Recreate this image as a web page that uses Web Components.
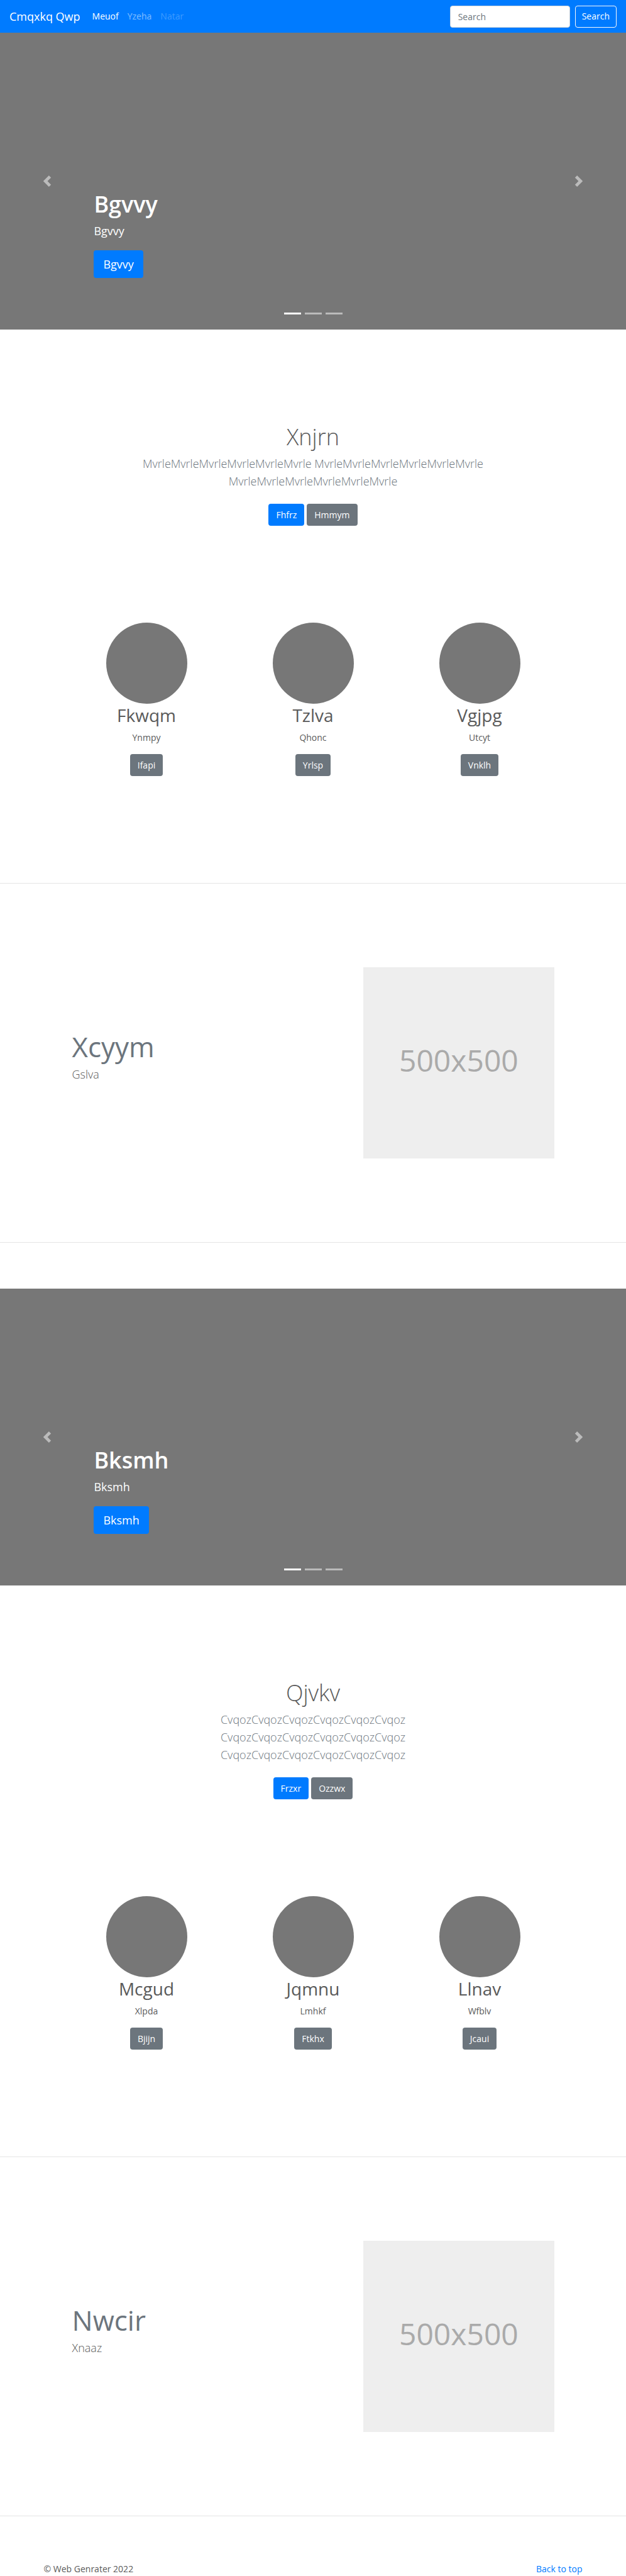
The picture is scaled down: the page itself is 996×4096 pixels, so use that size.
<!DOCTYPE html>
<html lang="en">
<head>
<meta charset="utf-8">
<meta name="viewport" content="width=device-width, initial-scale=1">
<title>Cmqxkq Qwp</title>
<style>
  html { background: #fff; }
  body {
    margin: 0;
    font-family: "Open Sans", "Noto Sans", sans-serif;
    font-size: 14px;
    line-height: 22px;
    color: #5a5a5a;
    --blue: #007bff;
    --gray: #6c757d;
    --fill: #777;
    --row: 795px;
  }
</style>
</head>
<body>
<site-nav brand="Cmqxkq Qwp">
  <nav-link state="active">Meuof</nav-link>
  <nav-link>Yzeha</nav-link>
  <nav-link state="disabled">Natar</nav-link>
</site-nav>
<main>
  <hero-carousel>
    <span slot="title">Bgvvy</span>
    <span slot="text">Bgvvy</span>
    <ui-button slot="action" size="large">Bgvvy</ui-button>
  </hero-carousel>
  <intro-block>
    <span slot="title">Xnjrn</span>
    MvrleMvrleMvrleMvrleMvrleMvrle MvrleMvrleMvrleMvrleMvrleMvrle MvrleMvrleMvrleMvrleMvrleMvrle
    <ui-button slot="actions">Fhfrz</ui-button>
    <ui-button slot="actions" variant="secondary">Hmmym</ui-button>
  </intro-block>
  <card-row>
    <profile-card name="Fkwqm" action="Ifapi">Ynmpy</profile-card>
    <profile-card name="Tzlva" action="Yrlsp">Qhonc</profile-card>
    <profile-card name="Vgjpg" action="Vnklh">Utcyt</profile-card>
  </card-row>
  <feature-row heading="Xcyym" picture="500x500">Gslva</feature-row>

  <hero-carousel>
    <span slot="title">Bksmh</span>
    <span slot="text">Bksmh</span>
    <ui-button slot="action" size="large">Bksmh</ui-button>
  </hero-carousel>
  <intro-block>
    <span slot="title">Qjvkv</span>
    CvqozCvqozCvqozCvqozCvqozCvqoz CvqozCvqozCvqozCvqozCvqozCvqoz CvqozCvqozCvqozCvqozCvqozCvqoz
    <ui-button slot="actions">Frzxr</ui-button>
    <ui-button slot="actions" variant="secondary">Ozzwx</ui-button>
  </intro-block>
  <card-row>
    <profile-card name="Mcgud" action="Bjijn">Xlpda</profile-card>
    <profile-card name="Jqmnu" action="Ftkhx">Lmhkf</profile-card>
    <profile-card name="Llnav" action="Jcaui">Wfblv</profile-card>
  </card-row>
  <feature-row heading="Nwcir" picture="500x500">Xnaaz</feature-row>
</main>
<site-footer>© Web Genrater 2022</site-footer>

<script>
  function define(name, render) {
    customElements.define(name, class extends HTMLElement {
      constructor() {
        super();
        this.attachShadow({ mode: "open" });
      }
      connectedCallback() {
        this.shadowRoot.innerHTML = render(this);
      }
    });
  }

  define("ui-button", () => `
    <style>
      :host { display: inline-block; --bg: var(--blue); }
      :host([variant="secondary"]) { --bg: var(--gray); }
      button {
        display: block; box-sizing: border-box; height: 35px; padding: 0 12px;
        font: inherit; font-size: 14px; font-weight: 400; line-height: 22px; color: #fff;
        background: var(--bg); border: 0; border-radius: 4px; cursor: pointer;
      }
      :host([size="large"]) button { height: 44px; padding: 0 15px; font-size: 18px; line-height: 28px; }
      :host([variant="outline"]) button { background: transparent; border: 1px solid #f8f9fa; padding: 0 10px; }
    </style>
    <button type="button"><slot></slot></button>`);

  define("nav-link", () => `
    <style>
      :host { display: block; }
      a { display: block; padding: 7px; color: rgba(255, 255, 255, .5); text-decoration: none; }
      :host([state="active"]) a { color: #fff; }
      :host([state="disabled"]) a { color: rgba(255, 255, 255, .25); }
    </style>
    <a href="#"><slot></slot></a>`);

  define("site-nav", el => `
    <style>
      :host { display: block; background: var(--blue); }
      nav { display: flex; align-items: center; box-sizing: border-box; min-height: 52px; padding: 0 15px; }
      .brand { margin-right: 12px; font-size: 18px; line-height: 28px; color: #fff; text-decoration: none; white-space: nowrap; }
      .links { display: flex; flex: 1; }
      form { display: flex; align-items: center; gap: 8px; }
      input {
        box-sizing: border-box; width: 191px; height: 35px; padding: 0 12px; font: inherit; color: #495057;
        background: #fff; border: 1px solid #ced4da; border-radius: 4px;
      }
      input::placeholder { color: #6c757d; opacity: 1; }
    </style>
    <nav>
      <a class="brand" href="#">${el.getAttribute("brand")}</a>
      <div class="links"><slot></slot></div>
      <form role="search">
        <input type="search" placeholder="Search" aria-label="Search">
        <ui-button variant="outline">Search</ui-button>
      </form>
    </nav>`);

  define("hero-carousel", () => `
    <style>
      :host { display: block; background: var(--fill); color: #fff; }
      .frame { display: grid; grid-template-columns: 15% 1fr 15%; min-height: 472px; }
      .arrow { display: flex; align-items: center; justify-content: center; padding: 0; background: none; border: 0; opacity: .5; cursor: pointer; }
      svg { width: 18px; height: 18px; fill: #fff; }
      .body { display: flex; flex-direction: column; justify-content: flex-end; align-items: flex-start; padding-bottom: 24px; }
      h1 { margin: 0 0 6px; font-size: 36px; line-height: 44px; font-weight: 600; }
      p { margin: 0 0 17px; font-size: 18px; line-height: 28px; }
      .marks { display: flex; gap: 6px; align-self: center; margin-top: 55px; }
      .marks button { width: 27px; height: 3px; padding: 0; border: 0; background: #fff; opacity: .5; }
      .marks button:first-child { opacity: 1; }
    </style>
    <div class="frame">
      <button class="arrow" type="button" aria-label="Previous"><svg viewBox="0 0 8 8"><path d="M5.25 0l-4 4 4 4 1.5-1.5L4.25 4l2.5-2.5L5.25 0z"/></svg></button>
      <div class="body">
        <h1><slot name="title"></slot></h1>
        <p><slot name="text"></slot></p>
        <slot name="action"></slot>
        <div class="marks">
          <button type="button" aria-label="Slide 1"></button>
          <button type="button" aria-label="Slide 2"></button>
          <button type="button" aria-label="Slide 3"></button>
        </div>
      </div>
      <button class="arrow" type="button" aria-label="Next"><svg viewBox="0 0 8 8"><path d="M2.75 0l-1.5 1.5L3.75 4l-2.5 2.5L2.75 8l4-4-4-4z"/></svg></button>
    </div>`);

  define("intro-block", () => `
    <style>
      :host { display: block; padding: 149px 15px 154px; text-align: center; }
      h1 { margin: 0 0 6px; font-size: 36px; line-height: 44px; font-weight: 300; }
      p { max-width: 560px; margin: 0 auto 22px; font-size: 18px; line-height: 28px; font-weight: 300; color: var(--gray); }
      .actions { display: flex; justify-content: center; gap: 4px; }
    </style>
    <h1><slot name="title"></slot></h1>
    <p><slot></slot></p>
    <div class="actions"><slot name="actions"></slot></div>`);

  define("card-row", () => `
    <style>
      :host { display: grid; grid-template-columns: repeat(3, 1fr); max-width: var(--row); margin: 0 auto; padding-bottom: 170px; }
    </style>
    <slot></slot>`);

  define("profile-card", el => `
    <style>
      :host { display: flex; flex-direction: column; align-items: center; }
      .avatar { width: 129px; height: 129px; border-radius: 50%; background: var(--fill); }
      h2 { margin: 0 0 6px; font-size: 28px; line-height: 37px; font-weight: 400; }
      p { margin: 0 0 15px; line-height: 22px; }
    </style>
    <div class="avatar"></div>
    <h2>${el.getAttribute("name")}</h2>
    <p><slot></slot></p>
    <ui-button variant="secondary">${el.getAttribute("action")}</ui-button>`);

  define("feature-row", el => `
    <style>
      :host { display: block; margin-bottom: 73px; border: solid #e5e5e5; border-width: 1px 0; }
      section { display: grid; grid-template-columns: 7fr 5fr; max-width: var(--row); margin: 0 auto; padding: 133px 0; }
      .text { padding: 99px 14px 0; }
      h2 { margin: 0 0 2px; font-size: 44px; line-height: 55px; font-weight: 400; color: var(--gray); }
      p { margin: 0; font-size: 18px; line-height: 28px; font-weight: 300; }
      .picture {
        display: flex; align-items: center; justify-content: center; box-sizing: border-box;
        min-height: 304px; margin: 0 14px; padding-bottom: 8px;
        font-size: 48px; line-height: 60px; color: #aaa; background: #eee;
      }
    </style>
    <section>
      <div class="text">
        <h2>${el.getAttribute("heading")}</h2>
        <p><slot></slot></p>
      </div>
      <div class="picture">${el.getAttribute("picture")}</div>
    </section>`);

  define("site-footer", () => `
    <style>
      :host { display: flex; justify-content: space-between; max-width: 857px; margin: 0 auto; }
      a { color: var(--blue); text-decoration: none; }
    </style>
    <span><slot></slot></span>
    <a href="#">Back to top</a>`);
</script>
</body>
</html>
